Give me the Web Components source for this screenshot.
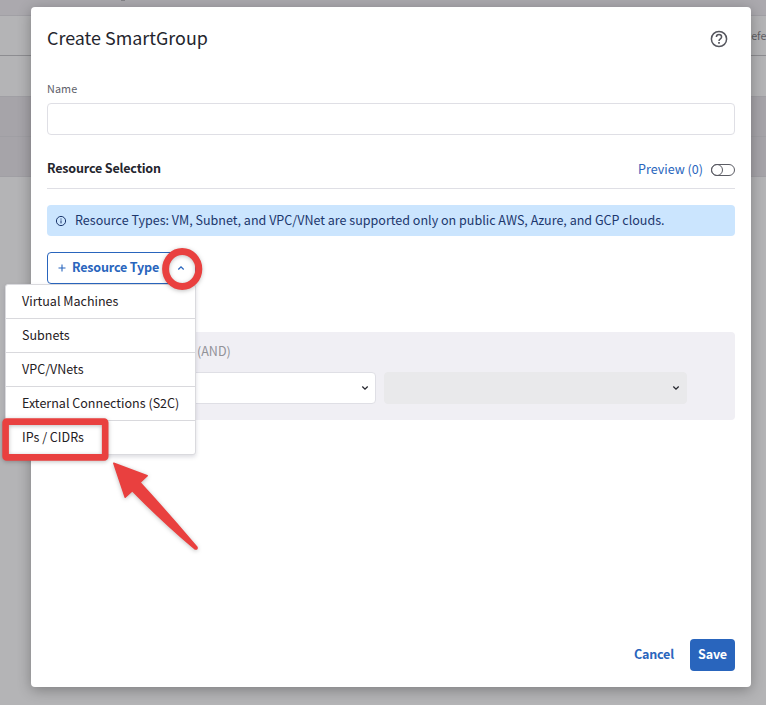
<!DOCTYPE html>
<html lang="en">
<head>
<meta charset="utf-8">
<title>Create SmartGroup</title>
<style>
html,body{margin:0;height:100%;overflow:hidden}
body{font:400 12.54px/20px "Noto Sans CJK SC","Noto Sans",sans-serif;color:#24252d;background:#b4b4b6}
</style>
</head>
<body>
<app-page></app-page>
<script>
const define=(name,html)=>customElements.define(name,class extends HTMLElement{
  connectedCallback(){
    if(this.shadowRoot)return;
    const t=document.createElement('template');t.innerHTML=html;
    this.attachShadow({mode:'open'}).append(t.content.cloneNode(true));
  }
});

define('page-backdrop',`<style>
:host{display:block;height:705px}
div{box-sizing:border-box}
.top{height:16px;background:#aba9ae;border-bottom:1px solid #a1a0a5}
.top i{display:block;width:4px;height:1px;background:#858489;margin-left:121px}
.tabs{height:40px;border-bottom:1px solid #8d8d91;display:flex;justify-content:flex-end;font-size:10.8px;line-height:39px;color:#606065;white-space:nowrap}
.tabs span{margin-right:-.5px}
.gap{height:40px}
.row{height:40px;background:#a6a4a9;border-top:1px solid #a09fa4}
.row.last{height:41px;border-bottom:1px solid #a09fa4}
</style><div class="top"><i></i></div><div class="tabs"><span>Refe</span></div><div class="gap"></div><div class="row"></div><div class="row last"></div>`);

define('help-icon',`<style>:host{display:block;width:18px;height:18px}svg{display:block}</style>
<svg width="18" height="18" viewBox="0 0 18 18" fill="none" stroke="#55565e"><circle cx="9" cy="9" r="7.6" stroke-width="1.5"/><path d="M6.4 7.1C6.4 5.5 7.5 4.6 9 4.6s2.6 1 2.6 2.4C11.6 8.8 9 8.9 9 11" stroke-width="1.5"/><path d="M9 12.1v1.6" stroke-width="1.7"/></svg>`);
define('info-icon',`<style>:host{display:block;width:12px;height:12px}svg{display:block}</style>
<svg width="12" height="12" viewBox="0 0 12 12" fill="none" stroke="#1c376d"><circle cx="6" cy="6" r="4.6"/><path d="M6 5.4v3M6 3.5v1.1"/></svg>`);
define('chevron-icon',`<style>:host{display:block;width:8px;height:6px}:host([up]){transform:scaleY(-1)}svg{display:block}</style>
<svg width="8" height="6" viewBox="0 0 8 6" fill="none" stroke="currentColor" stroke-width="1.3"><path d="M1.3 1.5 4 4.1 6.7 1.5"/></svg>`);
define('toggle-switch',`<style>:host{display:block;width:24px;height:12px}svg{display:block}</style>
<svg width="24" height="12" viewBox="0 0 24 12" fill="none" stroke="#5b5c64"><rect x=".5" y=".5" width="23" height="11" rx="5.5"/><circle cx="6" cy="6" r="5.5"/></svg>`);

define('text-field',`<style>:host{display:block}
label{display:block;font-size:10.8px;line-height:14px;color:#60616a;letter-spacing:.1px}
div{box-sizing:border-box;height:32px;margin-top:8px;border:1px solid #dfdfe5;border-radius:4px;background:#fff}</style>
<label><slot></slot></label><div></div>`);
define('section-heading',`<style>:host{display:flex;box-sizing:border-box;height:34px;border-bottom:1px solid #dfdfe5;justify-content:space-between}
b{font-weight:700;line-height:26px;letter-spacing:-.18px}.p{display:flex;align-items:center;height:28px;gap:8px;color:#2965bd}toggle-switch{margin-top:1px}</style>
<b><slot></slot></b><span class="p"><span>Preview (0)</span><toggle-switch></toggle-switch></span>`);
define('info-banner',`<style>:host{display:flex;box-sizing:border-box;height:31px;padding-left:8px;gap:8px;align-items:center;border-radius:4px;background:#cbe5fe;color:#1c376d}info-icon{margin-top:1px}span{margin-bottom:2px}</style><info-icon></info-icon><span><slot></slot></span>`);
define('split-button',`<style>:host{display:flex;box-sizing:border-box;width:149px;height:32px;border:1px solid #2965bd;border-radius:4px;padding:0 10px;align-items:center;color:#2965bd;font-weight:700;letter-spacing:-.18px;white-space:nowrap}
svg{margin-right:6px}span{margin-bottom:2px}chevron-icon{margin-left:auto}</style>
<svg width="8" height="8" viewBox="0 0 8 8" stroke="currentColor" stroke-width="1.1"><path d="M4 .5v7M.5 4h7"/></svg><span><slot></slot></span><chevron-icon up></chevron-icon>`);
define('select-box',`<style>:host{display:flex;box-sizing:border-box;height:32px;border:1px solid #dfdfe5;border-radius:4px;background:#fff;align-items:center;justify-content:flex-end;padding-right:6px;color:#24252d}
:host([disabled]){background:#e9e9eb;border-color:#e9e9eb}</style><chevron-icon></chevron-icon>`);
define('condition-panel',`<style>:host{display:block;box-sizing:border-box;height:88px;border-radius:4px;background:#f0eff4;padding:10px 48px 0 16px;color:#929298}
p{margin:0 0 12px;line-height:18px;padding-left:134px}
div{display:grid;grid-template-columns:1fr 303px;gap:8px}</style><p><slot></slot></p><div><select-box></select-box><select-box disabled></select-box></div>`);
define('action-button',`<style>:host{display:block;height:32px;line-height:30px;color:#2965bd;font-weight:700;letter-spacing:-.18px;text-align:center}
:host([primary]){width:45px;border-radius:4px;background:#2965bd;color:#fff}</style><slot></slot>`);

define('smart-dialog',`<style>
:host{display:flex;flex-direction:column;box-sizing:border-box;width:720px;height:680px;padding:16px;background:#fff;border-radius:4px;box-shadow:0 3px 14px rgba(0,0,0,.3)}
header{display:flex;justify-content:space-between;height:32px}
h1{margin:0;font-weight:400;font-size:17.9px;line-height:28px}
help-icon{margin:7px 7px 0 0}
text-field{margin-top:26px}
section-heading{margin-top:20px}
info-banner{margin-top:16px}
split-button{margin-top:16px}
condition-panel{margin-top:48px}
footer{margin-top:auto;display:flex;justify-content:flex-end;gap:16px}
</style>
<header><h1><slot></slot></h1><help-icon></help-icon></header>
<text-field>Name</text-field>
<section-heading>Resource Selection</section-heading>
<info-banner>Resource Types: VM, Subnet, and VPC/VNet are supported only on public AWS, Azure, and GCP clouds.</info-banner>
<split-button>Resource Type</split-button>
<condition-panel><span>(AND)</span></condition-panel>
<footer><action-button>Cancel</action-button><action-button primary>Save</action-button></footer>`);

define('menu-item',`<style>:host{display:block;box-sizing:border-box;height:34px;padding:0 16px;line-height:31px;border-bottom:1px solid #d9d9dd;color:#1f2023}:host(:last-child){border-bottom:0}</style><slot></slot>`);
define('drop-menu',`<style>:host{display:block;box-sizing:border-box;width:191px;height:171px;border:1px solid #dadade;border-radius:3px;background:#fff;box-shadow:0 2px 4px rgba(60,60,90,.18);white-space:nowrap}</style><slot></slot>`);

define('callout-marks',`<style>:host{display:block}svg{display:block;filter:drop-shadow(0 1px 2px rgba(0,0,0,.25))}</style>
<svg width="766" height="705" fill="none" stroke="#e9403f">
<ellipse cx="182.2" cy="269" rx="16.6" ry="17.6" stroke-width="7"/>
<rect x="5.6" y="421.6" width="99.6" height="35.8" rx="1" stroke-width="6.6"/>
<path d="M113.8 463.3 147.2 475.8 140 482.5Q168 513 197 547.3Q197.500 549.500 195 549Q164 523 132.300 490.700L125.200 497.200Z" fill="#e9403f" stroke-width="1.500" stroke-linejoin="round"/></svg>`);

define('app-page',`<style>
:host{display:grid;width:766px;height:705px;overflow:hidden;position:relative}
page-backdrop,smart-dialog{grid-area:1/1}
smart-dialog{margin:7px 0 0 31px}
drop-menu{position:absolute;left:5px;top:284px}
callout-marks{position:absolute;inset:0}
</style>
<page-backdrop></page-backdrop>
<smart-dialog>Create SmartGroup</smart-dialog>
<drop-menu><menu-item>Virtual Machines</menu-item><menu-item>Subnets</menu-item><menu-item>VPC/VNets</menu-item><menu-item>External Connections (S2C)</menu-item><menu-item>IPs / CIDRs</menu-item></drop-menu>
<callout-marks></callout-marks>`);
</script>
</body>
</html>
